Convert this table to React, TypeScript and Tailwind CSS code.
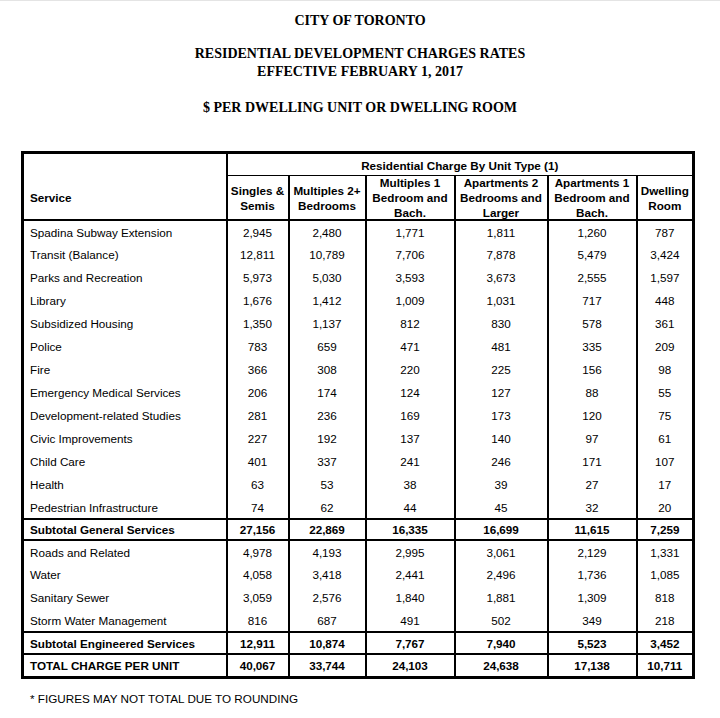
type Row = { name: string; values: string[] };

const general: Row[] = [
  { name: "Spadina Subway Extension", values: ["2,945", "2,480", "1,771", "1,811", "1,260", "787"] },
  { name: "Transit (Balance)", values: ["12,811", "10,789", "7,706", "7,878", "5,479", "3,424"] },
  { name: "Parks and Recreation", values: ["5,973", "5,030", "3,593", "3,673", "2,555", "1,597"] },
  { name: "Library", values: ["1,676", "1,412", "1,009", "1,031", "717", "448"] },
  { name: "Subsidized Housing", values: ["1,350", "1,137", "812", "830", "578", "361"] },
  { name: "Police", values: ["783", "659", "471", "481", "335", "209"] },
  { name: "Fire", values: ["366", "308", "220", "225", "156", "98"] },
  { name: "Emergency Medical Services", values: ["206", "174", "124", "127", "88", "55"] },
  { name: "Development-related Studies", values: ["281", "236", "169", "173", "120", "75"] },
  { name: "Civic Improvements", values: ["227", "192", "137", "140", "97", "61"] },
  { name: "Child Care", values: ["401", "337", "241", "246", "171", "107"] },
  { name: "Health", values: ["63", "53", "38", "39", "27", "17"] },
  { name: "Pedestrian Infrastructure", values: ["74", "62", "44", "45", "32", "20"] },
];

const engineered: Row[] = [
  { name: "Roads and Related", values: ["4,978", "4,193", "2,995", "3,061", "2,129", "1,331"] },
  { name: "Water", values: ["4,058", "3,418", "2,441", "2,496", "1,736", "1,085"] },
  { name: "Sanitary Sewer", values: ["3,059", "2,576", "1,840", "1,881", "1,309", "818"] },
  { name: "Storm Water Management", values: ["816", "687", "491", "502", "349", "218"] },
];

const subGeneral: Row = { name: "Subtotal General Services", values: ["27,156", "22,869", "16,335", "16,699", "11,615", "7,259"] };
const subEngineered: Row = { name: "Subtotal Engineered Services", values: ["12,911", "10,874", "7,767", "7,940", "5,523", "3,452"] };
const total: Row = { name: "TOTAL CHARGE PER UNIT", values: ["40,067", "33,744", "24,103", "24,638", "17,138", "10,711"] };

const headers = [
  ["Singles &", "Semis"],
  ["Multiples 2+", "Bedrooms"],
  ["Multiples 1", "Bedroom and", "Bach."],
  ["Apartments 2", "Bedrooms and", "Larger"],
  ["Apartments 1", "Bedroom and", "Bach."],
  ["Dwelling", "Room"],
];

const DataRow = ({ row, h }: { row: Row; h: string }) => (
  <tr>
    <td className={`${h} border-x-2 border-black pl-[6px] text-left`}>{row.name}</td>
    {row.values.map((v, i) => (
      <td key={i} className={`${h} border-x-2 border-black text-center`}>
        {v}
      </td>
    ))}
  </tr>
);

const BoldRow = ({ row, h }: { row: Row; h: string }) => (
  <tr className="font-bold">
    <td className={`${h} border-2 border-black pl-[6px] text-left`}>{row.name}</td>
    {row.values.map((v, i) => (
      <td key={i} className={`${h} border-2 border-black text-center`}>
        {v}
      </td>
    ))}
  </tr>
);

export default function App() {
  return (
    <div className="w-[720px] h-[718px] bg-white text-black border-t border-[#e4e4e4] overflow-hidden">
      <header className="font-['Liberation_Serif','Times_New_Roman',serif] font-bold text-[14px] leading-[19px] text-center pt-[10px]">
        <h1>CITY OF TORONTO</h1>
        <h2 className="mt-[15px] leading-[18px]">
          RESIDENTIAL DEVELOPMENT CHARGES RATES
          <br />
          EFFECTIVE FEBRUARY 1, 2017
        </h2>
        <h3 className="mt-[17px]">$ PER DWELLING UNIT OR DWELLING ROOM</h3>
      </header>

      <div className="mt-[34px] ml-[21px] font-['Liberation_Sans',Arial,sans-serif] text-[11.7px] leading-[15px]">
        <table className="w-[674px] table-fixed border-collapse border-[3px] border-black">
          <colgroup>
            <col className="w-[204px]" />
            <col className="w-[62px]" />
            <col className="w-[77px]" />
            <col className="w-[89px]" />
            <col className="w-[93px]" />
            <col className="w-[89px]" />
            <col className="w-[57px]" />
          </colgroup>
          <thead className="font-bold">
            <tr>
              <th rowSpan={2} className="border-2 border-black pl-[6px] pt-[22px] text-left font-bold">
                Service
              </th>
              <th colSpan={6} className="h-[23px] border-b border-black pt-[1px] text-center font-bold">
                Residential Charge By Unit Type (1)
              </th>
            </tr>
            <tr>
              {headers.map((lines, i) => (
                <th key={i} className="border-x-2 border-b-2 border-black p-0 text-center font-bold">
                  <div className="flex h-[43px] flex-col justify-center">
                    {lines.map((l) => (
                      <div key={l}>{l}</div>
                    ))}
                  </div>
                </th>
              ))}
            </tr>
          </thead>
          <tbody>
            {general.map((r) => (
              <DataRow key={r.name} row={r} h="h-[23px]" />
            ))}
            <BoldRow row={subGeneral} h="h-[21px]" />
            {engineered.map((r) => (
              <DataRow key={r.name} row={r} h="h-[23px]" />
            ))}
            <BoldRow row={subEngineered} h="h-[22px]" />
            <BoldRow row={total} h="h-[23px]" />
          </tbody>
        </table>
        <p className="mt-[12px] pl-[9px]">* FIGURES MAY NOT TOTAL DUE TO ROUNDING</p>
      </div>
    </div>
  );
}
